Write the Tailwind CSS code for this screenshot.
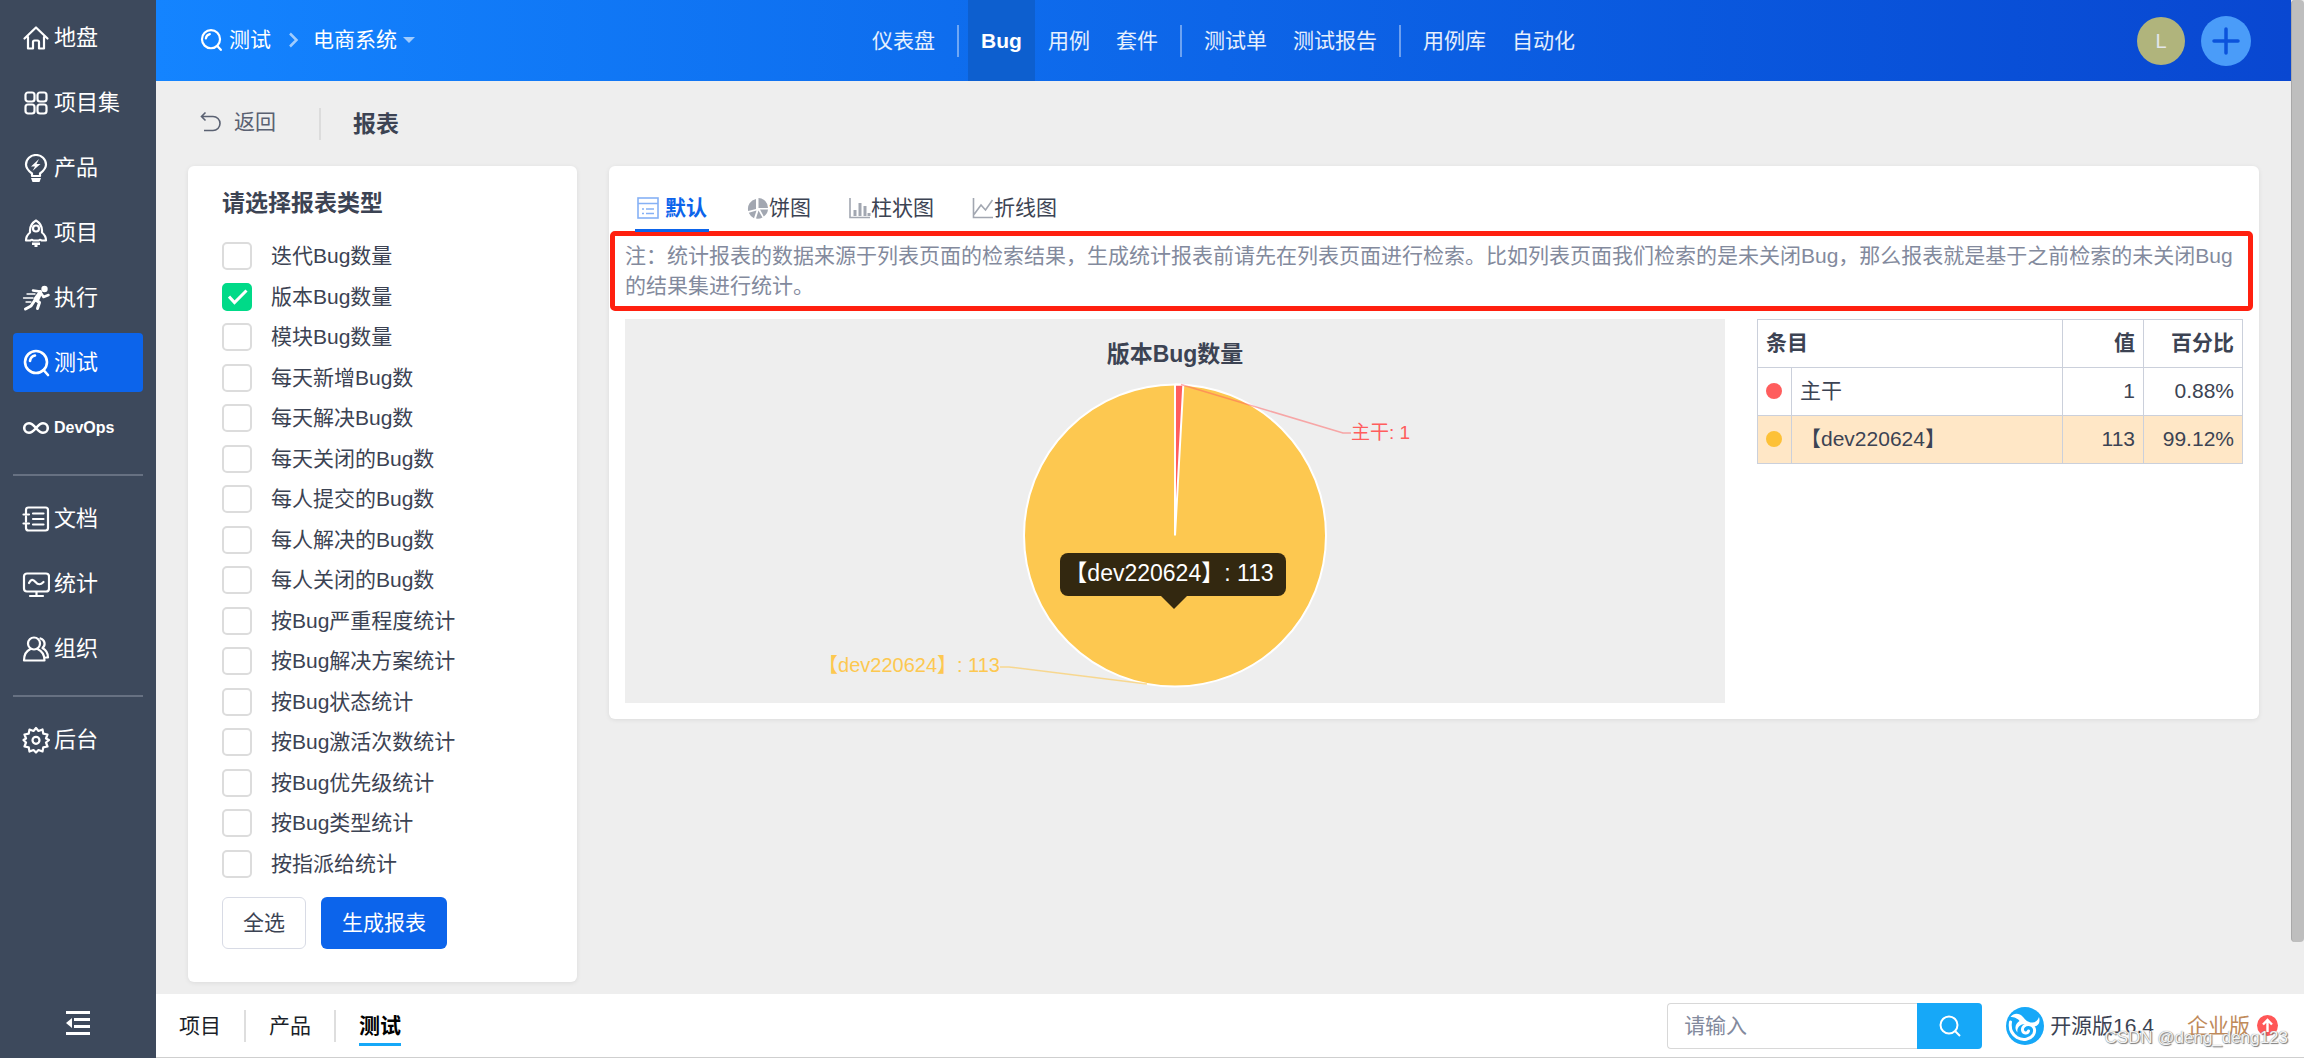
<!DOCTYPE html>
<html lang="zh-CN">
<head>
<meta charset="utf-8">
<meta name="viewport" content="width=device-width, initial-scale=1">
<title>报表 - 电商系统</title>
<script src="https://cdn.jsdelivr.net/npm/@tailwindcss/browser@4"></script>
</head>
<body class="flex min-h-screen bg-[#eeeeee] font-['Liberation_Sans','Noto_Sans_CJK_SC',sans-serif] text-[21px] leading-[30px] text-[#3c4353]">

<!-- Sidebar -->
<nav class="flex w-[156px] shrink-0 flex-col bg-[#3d495c] px-[13px] pt-2 pb-[21px] text-[22px] text-white">
  <ul class="flex flex-col gap-1.5 [&_a]:flex [&_a]:h-[59px] [&_a]:items-center [&_a]:gap-1 [&_a]:rounded-sm [&_a]:pl-[9px] [&_svg]:size-7 [&_svg]:shrink-0">
    <li><a href="#"><svg viewBox="0 0 28 28" fill="none" stroke="currentColor" stroke-width="2.2" stroke-linejoin="round" stroke-linecap="round"><path d="M2.5 14.5 14 3.5l11.500 11M6 13v11.500h5V18q0-1.500 1.500-1.500h3Q17 16.500 17 18v6.500h5V13"/></svg>地盘</a></li>
    <li><a href="#"><svg viewBox="0 0 28 28" fill="none" stroke="currentColor" stroke-width="2.2"><rect x="3.500" y="3.500" width="9" height="9" rx="2.500"/><rect x="15.500" y="3.500" width="9" height="9" rx="2.500"/><rect x="3.500" y="15.500" width="9" height="9" rx="2.500"/><rect x="15.500" y="15.500" width="9" height="9" rx="2.500"/></svg>项目集</a></li>
    <li><a href="#"><svg viewBox="0 0 28 28" fill="none" stroke="currentColor" stroke-width="2.2"><path d="M10 22v-2.500C6 16.500 4 14 4 10.500a10 9.500 0 0 1 20 0c0 3.500-2 6-6 9V22z" stroke-linejoin="round"/><path d="M9 24h10l-1.500 4h-7z" fill="currentColor" stroke="none"/><path d="m17 5-8 7.500h4L10.500 17l8-7h-4z" fill="currentColor" stroke="none"/></svg>产品</a></li>
    <li><a href="#"><svg viewBox="0 0 28 28" fill="none" stroke="currentColor" stroke-width="2.200" stroke-linejoin="round"><path d="M14 1.500c-4 2.500-6 6-6 10v2c-2.500 2-4 4.500-4 8h4.500q1.500-1.500 2.500 0h6q1-1.500 2.500 0H24c0-3.500-1.500-6-4-8v-2c0-4-2-7.500-6-10z"/><circle cx="14" cy="9.500" r="3"/><path d="M10 23.500h8V26h-2.500v2.500h-3V26H10z" fill="currentColor" stroke="none"/></svg>项目</a></li>
    <li><a href="#"><svg viewBox="0 0 28 28" fill="none" stroke="currentColor" stroke-width="3" stroke-linecap="round" stroke-linejoin="round"><circle cx="22.500" cy="5" r="3.200" fill="currentColor" stroke="none"/><path d="M18.500 7.500 13 15l4.500 3.500-2 6M13 16l-4 6-5.500 3" /><path d="m11 6.500 7 1 3.500 5.500 5-2" stroke-width="2.500"/><path d="m17 8-5 9 4 2 4-9z" fill="currentColor" stroke="none"/><path d="M5 10h8M1.500 14H11M4 18h5" stroke-width="1.300"/></svg>执行</a></li>
    <li><a href="#" aria-current="page" class="bg-[#0c64eb]"><svg viewBox="0 0 28 28" fill="none" stroke="currentColor" stroke-width="2.600" stroke-linecap="round"><circle cx="14" cy="13" r="11"/><path d="m21.500 21 4.500 5M8 12q.500-4.500 5-5.500" /></svg>测试</a></li>
    <li><a href="#"><svg viewBox="0 0 28 28" fill="none" stroke="currentColor" stroke-width="2.600"><path d="M14 14c-2.500-3-4.500-4.800-7-4.800a4.800 4.800 0 0 0 0 9.600c2.500 0 4.500-1.800 7-4.800s4.500-4.800 7-4.800a4.800 4.800 0 0 1 0 9.600c-2.500 0-4.500-1.800-7-4.800z"/></svg><span class="text-[16px] font-bold">DevOps</span></a></li>
  </ul>
  <hr class="mt-[17px] mb-[13px] border-t-2 border-[#677182]">
  <ul class="flex flex-col gap-1.5 [&_a]:flex [&_a]:h-[59px] [&_a]:items-center [&_a]:gap-1 [&_a]:rounded-sm [&_a]:pl-[9px] [&_svg]:size-7 [&_svg]:shrink-0">
    <li><a href="#"><svg viewBox="0 0 28 28" fill="none" stroke="currentColor" stroke-width="2.200" stroke-linecap="round"><path d="M4 8V5q0-2.500 2.500-2.500h17Q26 2.500 26 5v18q0 2.500-2.500 2.500h-17Q4 25.500 4 23v-3M4 11.500v5M1.500 9.500H7M1.500 18.500H7"/><path d="M11 8.500h10.500M11 14h10.500M11 19.500h10.500"/></svg>文档</a></li>
    <li><a href="#"><svg viewBox="0 0 28 28" fill="none" stroke="currentColor" stroke-width="2.200" stroke-linecap="round"><rect x="2" y="3.500" width="25" height="18" rx="3"/><path d="M7 13c2-4 4-4 6.500-1s5 3 8 0M14.500 22v3M8 26h13"/></svg>统计</a></li>
    <li><a href="#"><svg viewBox="0 0 28 28" fill="none" stroke="currentColor" stroke-width="2.200" stroke-linejoin="round" stroke-linecap="round"><circle cx="12" cy="8.500" r="6"/><path d="M8.500 14C4 16 2 20 2 25.500h20.500c0-5.500-2.500-9.500-7-11.500M18.500 3.500c4.500 1.500 5.500 6.500 2 9.500 3.500 2 5.500 5 5.500 9.500h-2"/></svg>组织</a></li>
  </ul>
  <hr class="mt-[17px] mb-[13px] border-t-2 border-[#677182]">
  <a href="#" class="flex h-[59px] items-center gap-1 pl-[9px]"><svg class="size-7" viewBox="0 0 28 28" fill="none" stroke="currentColor" stroke-width="2.200" stroke-linejoin="round"><path d="m14 2 2.500 3 4-1.500.800 4.200 4.200.800-1.500 4L27 14l-3 2.500 1.500 4-4.200.800-.800 4.200-4-1.500L14 26.500l-2.500-2.500-4 1.500-.800-4.200-4.200-.800 1.500-4L1.500 14 4 12.500l-1.500-4 4.200-.800.800-4.200 4 1.500z"/><circle cx="14" cy="14.300" r="3.500"/></svg>后台</a>
  <button type="button" aria-label="收起菜单" class="mt-auto self-center"><svg class="h-7 w-6" viewBox="0 0 24 28" fill="none" stroke="currentColor" stroke-width="2.800"><path d="M0 3.500h24M8 10.500h16M8 17.500h16M0 24.500h24"/><path d="M0 14l6-5v10z" fill="currentColor" stroke="none"/></svg></button>
</nav>

<div class="flex min-w-0 flex-1 flex-col">
  <div class="flex flex-1">
    <div class="flex min-w-0 flex-1 flex-col">

      <!-- Top bar -->
      <header class="grid h-[81px] grid-cols-[1fr_auto_1fr] items-center bg-linear-to-r from-[#1484ff] via-[#0d65e8] to-[#0947d1] text-white">
        <div class="flex items-center pb-0.5 pl-11">
          <a href="#" class="flex items-center gap-[7px]"><svg class="size-[22px]" viewBox="0 0 28 28" fill="none" stroke="currentColor" stroke-width="2.800" stroke-linecap="round"><circle cx="14" cy="13" r="11.500"/><path d="m22 21.500 4.500 5M7.500 12q.500-4.500 5-5.500"/></svg>测试</a>
          <svg class="mr-[14px] ml-[17px] h-4 w-[11px] text-white/60" viewBox="0 0 11 16" fill="none" stroke="currentColor" stroke-width="2.500"><path d="m2 1.500 6.500 6.500L2 14.500"/></svg>
          <a href="#" class="flex items-center gap-1.5">电商系统<svg class="h-1.5 w-3 text-white/60" viewBox="0 0 12 6" fill="currentColor"><path d="M0 0h12L6 6z"/></svg></a>
        </div>
        <nav class="flex items-center self-stretch [&_a]:flex [&_a]:items-center [&_a]:self-stretch [&_a]:px-[13px] text-white/90">
          <a href="#">仪表盘</a>
          <span class="mx-[9px] h-8 w-0.5 bg-white/40"></span>
          <a href="#" aria-current="page" class="bg-[#0d5fcf] font-bold text-white">Bug</a>
          <a href="#">用例</a>
          <a href="#">套件</a>
          <span class="mx-[9px] h-8 w-0.5 bg-white/40"></span>
          <a href="#">测试单</a>
          <a href="#">测试报告</a>
          <span class="mx-[9px] h-8 w-0.5 bg-white/40"></span>
          <a href="#">用例库</a>
          <a href="#">自动化</a>
        </nav>
        <div class="flex items-center justify-end gap-4 pr-10">
          <button type="button" class="size-12 rounded-full bg-[#b0b47c] text-[20px] text-[#e3e6ea]">L</button>
          <button type="button" aria-label="新增" class="grid size-[50px] place-items-center rounded-full bg-[#4a9cf9]"><svg class="size-7" viewBox="0 0 28 28" stroke="#0b53dc" stroke-width="3.500" stroke-linecap="round"><path d="M14 2v24M2 14h24"/></svg></button>
        </div>
      </header>

      <main class="flex flex-1 flex-col px-8 pb-3">
        <div class="flex h-[85px] items-center pl-3">
          <a href="#" class="flex items-center gap-3 pb-1 text-[#5a6172]"><svg class="h-[22px] w-[22px]" viewBox="0 0 22 22" fill="none" stroke="currentColor" stroke-width="1.600"><path d="M5.500 1.500 1.500 5.500l4 4M1.500 5.500H13a7 7 0 0 1 0 14H4"/></svg>返回</a>
          <span class="mr-8 ml-[43px] h-8 w-0.5 bg-[#dcdcdc]"></span>
          <h1 class="text-[23px] font-bold">报表</h1>
        </div>

        <div class="flex items-start gap-8">
          <!-- Report type form -->
          <form class="w-[389px] shrink-0 rounded-md bg-white px-[34px] pt-[22px] pb-[33px] shadow-[0_1px_5px_rgba(0,0,0,0.08)]">
            <h2 class="mb-[18px] text-[23px] font-bold">请选择报表类型</h2>
            <ul class="grid h-[648px] auto-rows-fr [&_input]:h-7 [&_input]:w-[30px] [&_input]:appearance-none [&_input]:rounded-[5px] [&_input]:border-2 [&_input]:border-[#dcdcdc] [&_input]:bg-white [&_input:checked]:border-[#00da88] [&_input:checked]:bg-[#00da88] [&_label]:relative [&_label]:flex [&_label]:h-full [&_label]:items-center [&_label]:gap-[19px]">
              <li><label><input type="checkbox">迭代Bug数量</label></li>
              <li><label><input type="checkbox" checked>版本Bug数量<svg class="absolute top-3 left-1.5 h-4 w-5" viewBox="0 0 20 16" fill="none" stroke="#fff" stroke-width="3"><path d="m1 7.500 5.500 6L18.500 1.500"/></svg></label></li>
              <li><label><input type="checkbox">模块Bug数量</label></li>
              <li><label><input type="checkbox">每天新增Bug数</label></li>
              <li><label><input type="checkbox">每天解决Bug数</label></li>
              <li><label><input type="checkbox">每天关闭的Bug数</label></li>
              <li><label><input type="checkbox">每人提交的Bug数</label></li>
              <li><label><input type="checkbox">每人解决的Bug数</label></li>
              <li><label><input type="checkbox">每人关闭的Bug数</label></li>
              <li><label><input type="checkbox">按Bug严重程度统计</label></li>
              <li><label><input type="checkbox">按Bug解决方案统计</label></li>
              <li><label><input type="checkbox">按Bug状态统计</label></li>
              <li><label><input type="checkbox">按Bug激活次数统计</label></li>
              <li><label><input type="checkbox">按Bug优先级统计</label></li>
              <li><label><input type="checkbox">按Bug类型统计</label></li>
              <li><label><input type="checkbox">按指派给统计</label></li>
            </ul>
            <div class="mt-[13px] flex gap-[15px]">
              <button type="button" class="h-[52px] rounded-md border border-[#d8dbe5] bg-white px-5">全选</button>
              <button type="submit" class="h-[52px] rounded-md bg-[#0c64eb] px-[21px] text-white">生成报表</button>
            </div>
          </form>

          <!-- Report panel -->
          <section class="min-w-0 flex-1 rounded-md bg-white pt-5 pb-4 shadow-[0_1px_5px_rgba(0,0,0,0.08)]">
            <div class="flex items-start gap-[38px] pl-[26px] [&_a]:flex [&_a]:items-center">
              <a href="#" aria-current="page" class="h-[46px] gap-1.5 border-b-3 border-[#0c64eb] px-0.5 font-bold text-[#0c64eb]"><svg class="size-[22px]" viewBox="0 0 22 22" fill="none" stroke="#86b1f5" stroke-width="1.600"><rect x="1" y="1" width="20" height="20"/><path d="M1 6.500h20M5 12h2M9 12h8M5 16.500h2M9 16.500h8"/></svg>默认</a>
              <a href="#" class="h-[43px]"><svg class="size-[22px]" viewBox="0 0 22 22" fill="#a2a7b1"><path d="M9 12 1.200 14A10 10 0 0 1 9 2zM11.500 11V1A10 10 0 0 1 21 11zM9.500 13.500 7 21.200A10 10 0 0 1 1.800 15.800zM11.500 13.500l4 7a10 10 0 0 1-6.500 1.100zM13 12.500h8a10 10 0 0 1-4.200 7z"/></svg>饼图</a>
              <a href="#" class="h-[43px]"><svg class="size-[22px]" viewBox="0 0 22 22" fill="none" stroke="#a2a7b1"><path d="M1 1v19.500h20" stroke-width="1.600"/><path d="M6 19v-6M11 19V6M16 19V9M20 19v-3" stroke-width="3"/></svg>柱状图</a>
              <a href="#" class="h-[43px]"><svg class="size-[22px]" viewBox="0 0 22 22" fill="none" stroke="#a2a7b1" stroke-width="1.600"><path d="M1.500 1v19.500H21M2 17.500l7-9.500 4.500 5L20.500 3"/></svg>折线图</a>
            </div>
            <p class="mr-1.5 -mt-px ml-px rounded-[5px] border-5 border-[#ff200f] pt-[5px] pr-1 pb-[5px] pl-[10px] text-[#838a9d]">注：统计报表的数据来源于列表页面的检索结果，生成统计报表前请先在列表页面进行检索。比如列表页面我们检索的是未关闭Bug，那么报表就是基于之前检索的未关闭Bug的结果集进行统计。</p>

            <div class="mt-2 flex items-start gap-8 px-4">
              <figure class="relative flex min-w-0 flex-1 flex-col items-center bg-[#eeeeee] pt-5">
                <figcaption class="leading-[31px] text-[23px] font-bold">版本Bug数量</figcaption>
                <svg class="h-[333px] w-[800px] max-w-full" viewBox="0 0 800 333" font-size="19" role="img" aria-label="版本Bug数量饼图">
                  <circle cx="400" cy="165.500" r="151" fill="#fdc850" stroke="#fff" stroke-width="2"/>
                  <path d="M400 165.500V14.500A151 151 0 0 1 408.300 14.700Z" fill="#ff5d5d" stroke="#fff" stroke-width="2" stroke-linejoin="bevel"/>
                  <path d="M406 14.500 568 63h8" fill="none" stroke="#ff5d5d" stroke-opacity=".5" stroke-width="1.500"/>
                  <text x="576" y="69" fill="#ff5d5d">主干: 1</text>
                  <path d="M225 297h9l138 17" fill="none" stroke="#fdc850" stroke-opacity=".6" stroke-width="1.500"/>
                  <text x="225" y="302" text-anchor="end" font-size="20" fill="#fdc850">【dev220624】: 113</text>
                </svg>
                <div role="tooltip" class="absolute top-[234px] left-1/2 -ml-[115px] flex h-[43px] w-[226px] items-center justify-center rounded-lg bg-black/80 pr-2 pb-1 text-[23px] whitespace-nowrap text-white">【dev220624】: 113
                  <svg class="absolute top-full left-[101px] h-[13px] w-[26px]" viewBox="0 0 26 13"><path d="M0 0h26L13 13z" fill="#000" fill-opacity=".8"/></svg>
                </div>
              </figure>

              <table class="w-[486px] shrink-0 table-fixed border-collapse border border-[#cbd0db] [&_td]:h-12 [&_td]:border [&_td]:border-[#cbd0db] [&_td]:px-2 [&_td]:pb-0.5 [&_th]:h-12 [&_th]:border [&_th]:border-[#cbd0db] [&_th]:px-2 [&_th]:pb-0.5">
                <colgroup><col class="w-[34px]"><col><col class="w-[81px]"><col class="w-[99px]"></colgroup>
                <thead><tr><th colspan="2" class="text-left">条目</th><th class="text-right">值</th><th class="text-right">百分比</th></tr></thead>
                <tbody>
                  <tr><td><span class="block size-4 rounded-full bg-[#ff5d5d]"></span></td><td>主干</td><td class="text-right">1</td><td class="text-right">0.88%</td></tr>
                  <tr class="bg-[#ffe7c6]"><td><span class="block size-4 rounded-full bg-[#fdc137]"></span></td><td>【dev220624】</td><td class="text-right">113</td><td class="text-right">99.12%</td></tr>
                </tbody>
              </table>
            </div>
          </section>
        </div>
      </main>
    </div>

    <!-- Scroll track -->
    <div class="flex w-[13px] shrink-0 flex-col">
      <div class="grow-18 rounded-sm border-l border-[#a8a8a8] bg-[#bebebe]"></div>
      <div class="grow"></div>
    </div>
  </div>

  <!-- Footer -->
  <footer class="flex h-16 items-center border-b border-[#cfcfcf] bg-white">
    <nav class="flex items-center text-[#1b1f29] [&_a]:mx-[23px]">
      <a href="#">项目</a>
      <span class="h-8 w-0.5 bg-[#dedede]"></span>
      <a href="#">产品</a>
      <span class="h-8 w-0.5 bg-[#dedede]"></span>
      <a href="#" aria-current="page" class="mt-[5px] border-b-3 border-[#16a8f8] pb-0.5 font-bold text-black">测试</a>
    </nav>
    <form class="ml-auto flex h-[46px]" role="search">
      <input type="text" aria-label="搜索" placeholder="请输入" class="w-[250px] rounded-l-sm border border-r-0 border-[#d8d8d8] px-4 placeholder:text-[#838a9d]">
      <button type="submit" aria-label="搜索" class="grid w-[65px] place-items-center rounded-r-sm bg-[#16a8f8]"><svg class="size-[22px]" viewBox="0 0 22 22" fill="none" stroke="#fff" stroke-width="2"><circle cx="10" cy="10" r="8.500"/><path d="m16 16 5 5"/></svg></button>
    </form>
    <div class="relative flex items-center pr-[26px] pl-6">
      <a href="#" class="flex items-center gap-1.5"><svg class="size-[38px]" viewBox="0 0 38 38" fill="none"><circle cx="19" cy="19" r="19" fill="#16a8f8"/><path d="M4.500 10C8 5.500 13.500 6 17 10c2.500 3 5 5.500 9 5.500 3.500 0 6-2 7-5.500 1.500 5-.500 9-5 9.500-3.500.500-5-2.500-9-2.500-5 0-8.500 4-7.500 8.500-4-4.500-1.500-9.500 2-11.500-1.500-2.500-5.500-4-9-4z" fill="#fff"/><path d="M4.500 15c-1 6 1 12 6.500 15.500 6 3.500 13.500 2 16.500-3 2.500-4.500.500-9.500-4.500-10-4-.300-7 2.500-6.500 5.500.500 3.500 5 4 6 1" stroke="#fff" stroke-width="3" stroke-linecap="round"/></svg>开源版16.4</a>
      <a href="#" class="ml-[33px] flex items-center gap-[7px] text-[#c08a5a]">企业版<svg class="size-[21px]" viewBox="0 0 21 21"><circle cx="10.500" cy="10.500" r="10.500" fill="#ff5757"/><path d="M10.500 17V5.500M6 9.500l4.500-4.500L15 9.500" fill="none" stroke="#fff" stroke-width="2.400"/></svg></a>
      <span class="absolute right-4 -bottom-1.5 text-[17px] leading-[26px] whitespace-nowrap text-[#f4f4f4] [text-shadow:1px_1px_1px_#777,0_0_1px_#777]">CSDN @deng_deng123</span>
    </div>
  </footer>
</div>
</body>
</html>
